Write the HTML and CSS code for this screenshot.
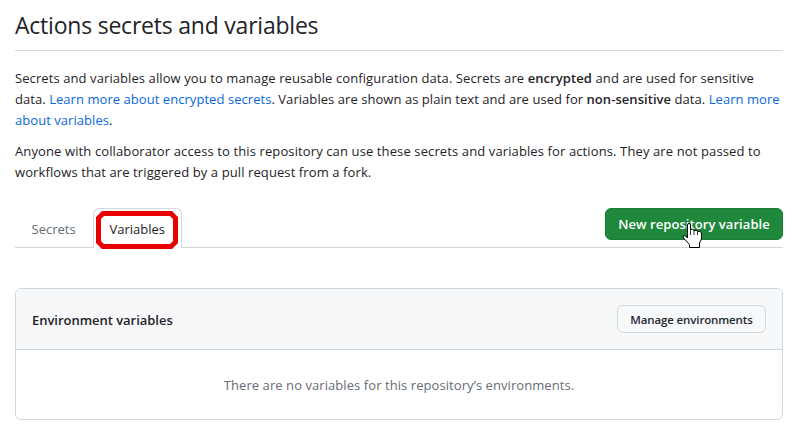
FILE: index.html
```html
<!DOCTYPE html>
<html lang="en">
<head>
<meta charset="utf-8">
<title>Actions secrets and variables</title>
<link rel="stylesheet" href="styles.css">
</head>
<body>
<main class="page">
  <h1 class="title"><span>Actions secrets and variables</span></h1>
  <p class="intro"><span class="l1">Secrets and variables allow you to manage reusable configuration data. Secrets are <b>encrypted</b> and are used for sensitive</span><br>
  <span class="l2">data. <a>Learn more about encrypted secrets</a>. Variables are shown as plain text and are used for <b>non-sensitive</b> data. <a>Learn more</a></span><br>
  <span class="l3"><a>about variables</a>.</span></p>
  <p class="intro"><span class="l4">Anyone with collaborator access to this repository can use these secrets and variables for actions. They are not passed to</span><br>
  <span class="l5">workflows that are triggered by a pull request from a fork.</span></p>
  <nav class="tabs">
    <a class="tab">Secrets</a>
    <a class="tab selected">Variables
      <svg class="highlight" width="82" height="38" viewBox="0 0 82 38"><path fill="#e80000" fill-rule="evenodd" d="M6 0H76L82 6V32L76 38H6L0 32V6ZM8 5L5 8V30L8 33H74L77 30V8L74 5Z"/></svg>
    </a>
    <button class="primary"><span>New repository variable</span>
      <svg class="cursor" width="21" height="27" viewBox="0 0 21 27"><path fill="#fff" stroke="#000" stroke-width="1" stroke-linejoin="round" d="M5.5 16V3Q5.500 1.500 7 1.500T8.500 3V7.500Q11 6.500 12 8.500Q14.500 7.500 15.500 9.500Q19 8.500 19.500 12V17L17.500 21V25.500H7.500V22.500L1.500 16Q0 13.500 2 13.500Q3.500 13.500 5.500 16Z"/><path fill="none" stroke="#000" stroke-width=".8" d="M8.500 7.500V13M12 8.500V13M15.500 9.500V13"/></svg>
    </button>
  </nav>
  <section class="box">
    <header class="box-head"><h2><span>Environment variables</span></h2><button class="manage"><span>Manage environments</span></button></header>
    <div class="empty"><span>There are no variables for this repository’s environments.</span></div>
  </section>
</main>
</body>
</html>
```
FILE: styles.css
```css
* { box-sizing: border-box; }
body { margin: 0; background: #fff; color: #1f2328; font: 13px/21px "Open Sans", "Noto Sans", sans-serif; }
.page { width: 768px; margin-left: 15px; }
.title { margin: 0 0 17px; height: 51px; padding-top: 7px; border-bottom: 1px solid #d0d7de; font-size: 23px; line-height: 36px; font-weight: 400; letter-spacing: -.22px; }
.intro { margin: 0 0 10px; white-space: nowrap; }
.intro b { font-weight: 600; }
.l1 { letter-spacing: .09px; }
.l2 { letter-spacing: .052px; }
.l3 { letter-spacing: .05px; }
.l4 { letter-spacing: .116px; }
.l5 { letter-spacing: .1px; }
a { color: #0969da; }
.tabs { display: flex; height: 40px; margin-top: 25px; border-bottom: 1px solid #d0d7de; }
.tab { height: 40px; padding: 10px 15.5px; border: 1px solid transparent; border-bottom: 0; color: #656d76; white-space: nowrap; width: 78px; }
.tab.selected { position: relative; width: 89px; border-color: #d0d7de; border-radius: 6px 6px 0 0; background: #fff; color: #1f2328; }
.highlight { position: absolute; left: 2px; top: 2px; }
button { font: inherit; font-weight: 600; white-space: nowrap; padding: 0; border-radius: 6px; }
.primary { position: relative; width: 178px; height: 32px; margin-left: auto; border: 1px solid #1b7c36; background: #1f883d; color: #fff; letter-spacing: .06px; }
.cursor { position: absolute; left: 76px; top: 13px; }
.box { height: 132px; margin-top: 40px; border: 1px solid #d0d7de; border-radius: 6px; overflow: hidden; }
.box-head { display: flex; align-items: center; justify-content: space-between; height: 61px; padding: 0 16px; background: #f6f8fa; border-bottom: 1px solid #d0d7de; }
h2 { margin: 0; padding-top: 2px; font-size: 13px; font-weight: 600; letter-spacing: -.03px; }
.manage { width: 149px; height: 28px; padding-top: 1px; border: 1px solid #d5d8da; background: #f6f8fa; color: #24292f; font-size: 11.5px; line-height: 20px; letter-spacing: -.13px; }
.empty { height: 70px; display: grid; place-items: center; color: #656d76; letter-spacing: .07px; }
```
